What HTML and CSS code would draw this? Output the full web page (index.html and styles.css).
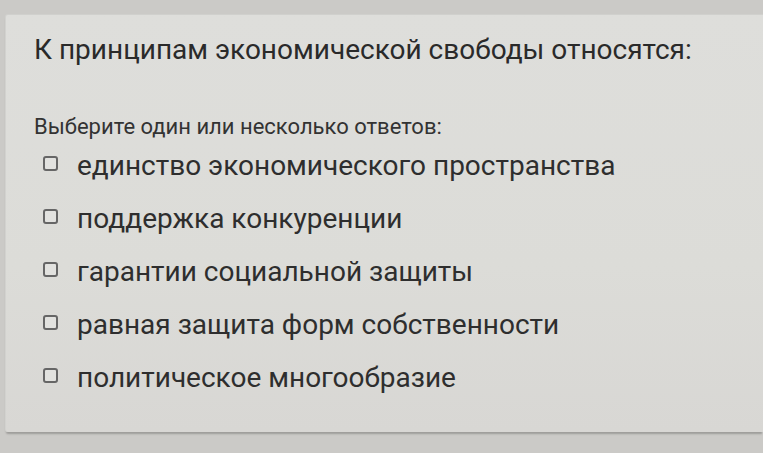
FILE: index.html
```html
<!DOCTYPE html>
<html lang="ru">
<head>
<meta charset="utf-8">
<title>Вопрос</title>
<link rel="stylesheet" href="styles.css">
</head>
<body>
<div class="page">
  <div class="card">
    <h1 class="question">К принципам экономической свободы относятся:</h1>
    <p class="hint">Выберите один или несколько ответов:</p>
    <ul class="options">
      <li class="option"><span class="box"></span><span class="label">единство экономического пространства</span></li>
      <li class="option"><span class="box"></span><span class="label">поддержка конкуренции</span></li>
      <li class="option"><span class="box"></span><span class="label">гарантии социальной защиты</span></li>
      <li class="option"><span class="box"></span><span class="label">равная защита форм собственности</span></li>
      <li class="option"><span class="box"></span><span class="label">политическое многообразие</span></li>
    </ul>
  </div>
</div>
</body>
</html>
```

FILE: styles.css
```css
html, body {
  margin: 0;
  padding: 0;
  width: 763px;
  height: 453px;
  overflow: hidden;
  background: #cbcac7;
}

.page {
  padding-top: 14px;
  padding-left: 5px;
  font-family: Roboto, "Noto Sans", sans-serif;
  color: #333333;
}

.card {
  height: 418px;
  box-sizing: border-box;
  padding: 18px 0 0 28px;
  background: linear-gradient(180deg, #dededb 0%, #dcdcd8 60%, #d8d7d4 100%);
  border-top: 1px solid #d0d0cd;
  border-left: 1px solid #d2d2cf;
  border-radius: 3px 0 0 3px;
  box-shadow: 0 3px 2px -1px #9d9c9a;
}

.question {
  margin: 0;
  font-size: 28px;
  line-height: 33px;
  font-weight: 400;
  color: #2a2a2a;
}

.hint {
  margin: 48px 0 0 0;
  font-size: 22px;
  line-height: 26px;
  color: #333333;
}

.options {
  list-style: none;
  margin: 9px 0 0 0;
  padding: 0 0 0 9px;
  display: flex;
  flex-direction: column;
  gap: 19px;
}

.option {
  display: flex;
  align-items: flex-start;
  gap: 19px;
}

.box {
  flex: none;
  width: 15px;
  height: 15px;
  box-sizing: border-box;
  margin-top: 7px;
  border: 2px solid #666666;
  border-radius: 3px;
  background: #e2e2df;
}

.label {
  font-size: 28px;
  line-height: 34px;
  color: #2e2e2e;
}
```
